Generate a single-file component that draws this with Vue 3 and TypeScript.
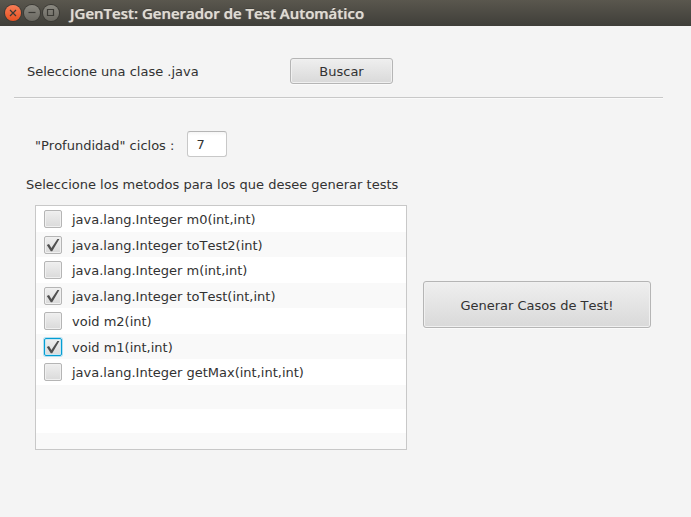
<script setup lang="ts">
import { onMounted, ref } from 'vue'

interface Method {
  signature: string
  selected: boolean
}

const depth = ref('7')
const methods = ref<Method[]>([
  { signature: 'java.lang.Integer m0(int,int)', selected: false },
  { signature: 'java.lang.Integer toTest2(int)', selected: true },
  { signature: 'java.lang.Integer m(int,int)', selected: false },
  { signature: 'java.lang.Integer toTest(int,int)', selected: true },
  { signature: 'void m2(int)', selected: false },
  { signature: 'void m1(int,int)', selected: true },
  { signature: 'java.lang.Integer getMax(int,int,int)', selected: false },
])
const emptyRows = 3
const list = ref<HTMLUListElement | null>(null)

// Keyboard focus starts on the last method that is ticked.
onMounted(() => {
  const ticked = list.value?.querySelectorAll<HTMLInputElement>('input:checked')
  if (ticked?.length) ticked[ticked.length - 1].focus()
})
</script>

<template>
  <div class="window">
    <header class="titlebar">
      <button class="control close" type="button" aria-label="Cerrar">
        <svg viewBox="0 0 16 16"><path d="M5 5l6 6M11 5l-6 6" /></svg>
      </button>
      <button class="control" type="button" aria-label="Minimizar">
        <svg viewBox="0 0 16 16"><path d="M4.5 7.5h7" /></svg>
      </button>
      <button class="control" type="button" aria-label="Maximizar">
        <svg viewBox="0 0 16 16"><path d="M4.5 4.5h6v6h-6z" /></svg>
      </button>
      <h1>JGenTest: Generador de Test Automático</h1>
    </header>

    <main>
      <section class="source">
        <label for="browse">Seleccione una clase .java</label>
        <button id="browse" class="push" type="button" aria-label="Buscar">Buscar</button>
      </section>
      <hr />
      <section class="depth">
        <label for="depth">"Profundidad" ciclos :</label>
        <input id="depth" v-model="depth" type="text" />
      </section>
      <p id="methods-title" class="prompt">Seleccione los metodos para los que desee generar tests</p>
      <section class="workspace">
        <ul ref="list" class="methods" aria-labelledby="methods-title">
          <li v-for="method in methods" :key="method.signature" class="method">
            <label>
              <span class="box">
                <input v-model="method.selected" type="checkbox" />
                <svg v-if="method.selected" viewBox="0 0 18 18">
                  <path d="M2.8 9L5 7.9L7.4 11.9L13.4 3H15.4L8.2 15.2H6.8Z" />
                </svg>
              </span>
              <span class="signature">{{ method.signature }}</span>
            </label>
          </li>
          <li v-for="n in emptyRows" :key="n" class="blank"></li>
        </ul>
        <button class="push generate" type="button">Generar Casos de Test!</button>
      </section>
    </main>
  </div>
</template>

<style>
body {
  margin: 0;
  background: #f4f4f4;
}
</style>

<style scoped>
.window {
  min-height: 100vh;
  background: #f4f4f4;
  color: #323232;
  font: 13px/16px "DejaVu Sans", sans-serif;
  font-kerning: none;
}

.titlebar {
  display: flex;
  align-items: center;
  gap: 3px;
  box-sizing: border-box;
  height: 26px;
  padding: 0 5px 1px;
  background: linear-gradient(#5a574e, #3f3e39);
}

.titlebar h1 {
  margin: 0 0 0 8px;
  color: #dfdbd2;
  font: 600 15px/16px "Open Sans", "Noto Sans", sans-serif;
  text-shadow: 0 0 1px #dfdbd2, 0 -1px #33322e;
  white-space: nowrap;
}

.control {
  flex: none;
  width: 16px;
  height: 16px;
  padding: 0;
  border: 0;
  border-radius: 50%;
  background: linear-gradient(#8b8981, #6a6861);
  box-shadow: 0 0 0 1px #3b3a35;
}

.close {
  background: linear-gradient(#f97d56, #e65222);
}

.control svg {
  display: block;
  width: 16px;
  height: 16px;
  fill: none;
  stroke: #3b3a35;
  stroke-width: 1.2;
}

main {
  padding: 32px 28px 0 14px;
}

.source {
  display: flex;
  align-items: center;
  padding-left: 13px;
}

.source label {
  width: 263px;
  padding-top: 2px;
}

.push {
  box-sizing: border-box;
  min-width: 103px;
  height: 26px;
  padding: 2px 28px 0;
  border: 1px solid #b5b5b5;
  border-radius: 3px;
  background: linear-gradient(#efefef, #d9d9d9);
  box-shadow: inset 0 0 0 1px #f0f0f0, 0 1px #fafafa;
  color: #323232;
  font: inherit;
  font-kerning: none;
}

hr {
  height: 1px;
  margin: 13px 0 33px;
  border: 0;
  background: #c8c8c8;
  box-shadow: 0 1px #fafafa;
}

.depth {
  display: flex;
  align-items: center;
  gap: 13px;
  padding-left: 21px;
}

.depth label {
  padding-top: 4px;
}

.depth input {
  box-sizing: border-box;
  width: 40px;
  height: 26px;
  padding: 0 8px;
  border: 1px solid #c8c8c8;
  border-top-color: #b5b5b5;
  border-radius: 3px;
  outline: 0;
  background: linear-gradient(#f5f5f5, #fff 4px);
  color: #323232;
  font: inherit;
}

.prompt {
  margin: 20px 0 12px;
  padding-left: 12px;
}

.workspace {
  display: grid;
  grid-template-columns: 372fr 228fr;
  gap: 16px;
  padding: 0 12px 0 21px;
}

.methods {
  height: 243px;
  margin: 0;
  padding: 0;
  overflow: hidden;
  border: 1px solid #c8c8c8;
  background: #fff;
  list-style: none;
}

.methods li {
  height: 26px;
}

.methods li:nth-child(even) {
  height: 25px;
  background: #f9f9f9;
}

.methods li.blank {
  height: 24px;
}

.method label {
  display: flex;
  align-items: center;
  gap: 10px;
  height: 100%;
  padding-left: 8px;
}

.signature {
  padding-top: 2px;
}

.box {
  display: grid;
  width: 18px;
  height: 18px;
}

.box > * {
  grid-area: 1 / 1;
}

.box input {
  appearance: none;
  box-sizing: border-box;
  width: 18px;
  height: 18px;
  margin: 0;
  border: 1px solid #b5b5b5;
  border-radius: 2px;
  outline: 0;
  background: linear-gradient(#efefef, #dadada);
  box-shadow: inset 0 0 0 1px #f0f0f0;
}

.box input:focus {
  border-color: #039ed3;
  box-shadow: 0 0 0 1px #b5dff0, inset 0 0 0 1px #c8e6f2;
}

.box svg {
  width: 18px;
  height: 18px;
  fill: #4f4f4f;
  pointer-events: none;
}

.generate {
  align-self: center;
  height: 47px;
  margin-bottom: 47px;
  padding-top: 4px;
}
</style>
